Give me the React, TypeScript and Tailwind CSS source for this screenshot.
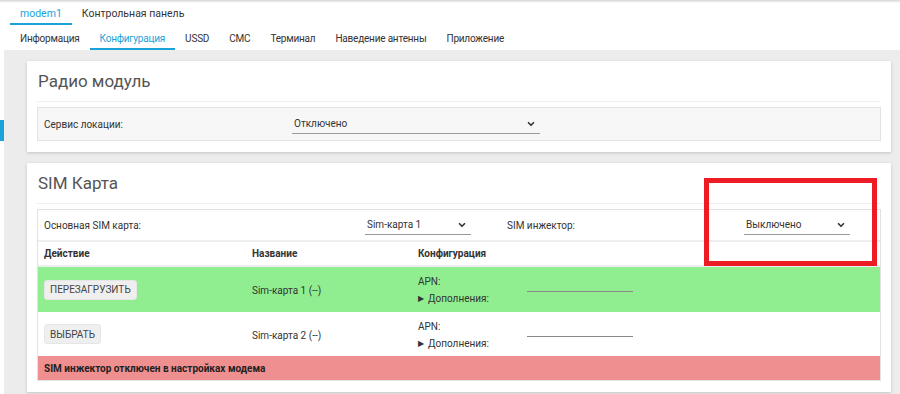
import { ChevronDown } from 'lucide-react'

const font = "font-['Roboto','Noto_Sans',sans-serif]"

type SelectProps = {
  value: string
  width: string
}

const Select = ({ value, width }: SelectProps) => (
  <div className={`${width} h-[20px] flex items-center justify-between border-b border-[#9a9a9a] pl-[2px] pr-[4px] text-[10px] text-[#333]`}>
    <span>{value}</span>
    <ChevronDown size={10} strokeWidth={4} className="text-[#333]" />
  </div>
)

const Card = ({ title, children }: { title: string; children: React.ReactNode }) => (
  <div className="bg-white shadow-[0_1px_3px_rgba(0,0,0,0.18)] px-[10px] pb-[11px]">
    <h2 className="pl-[1px] pt-[8px] pb-[8px] text-[17px] leading-[24px] text-[#555]">{title}</h2>
    <div className="h-[1px] bg-[#f0f0f0] mb-[5px]" />
    {children}
  </div>
)

const ActionButton = ({ label }: { label: string }) => (
  <button className="h-[20px] px-[5px] rounded-[3px] bg-[#efefef] border border-[#e6e6e6] text-[10px] text-[#444]">
    {label}
  </button>
)

type SimRow = {
  action: string
  name: string
  bg: string
  height: string
}

const rows: SimRow[] = [
  { action: 'ПЕРЕЗАГРУЗИТЬ', name: 'Sim-карта 1 (--)', bg: 'bg-[#90ee90]', height: 'h-[45px]' },
  { action: 'ВЫБРАТЬ', name: 'Sim-карта 2 (--)', bg: 'bg-white', height: 'h-[44px]' },
]

export default function App() {
  return (
    <div className={`${font} relative w-[900px] h-[394px] overflow-hidden bg-white text-[#333]`}>
      <div className="h-[3px] bg-gradient-to-b from-[#d6d6d6] to-white" />

      {/* top tabs */}
      <div className="flex h-[22px] pl-[10px] text-[10.5px]">
        <div className="px-[10px] pt-[3px] text-[#19a3d9] border-b-2 border-[#19a3d9]">modem1</div>
        <div className="px-[10px] pt-[3px]">Контрольная панель</div>
      </div>
      <div className="flex h-[25px] pl-[10px] text-[10px] tracking-[-0.2px]">
        {['Информация', 'Конфигурация', 'USSD', 'СМС', 'Терминал', 'Наведение антенны', 'Приложение'].map((t) =>
          t === 'Конфигурация' ? (
            <div key={t} className="px-[10px] pt-[6px] text-[#19a3d9] border-b-2 border-[#19a3d9]">{t}</div>
          ) : (
            <div key={t} className="px-[10px] pt-[6px]">{t}</div>
          ),
        )}
      </div>

      <div className="flex h-full">
        <div className="w-[4px] bg-white pt-[70px]">
          <div className="h-[21px] bg-[#19a3d9]" />
        </div>

        <div className="flex-1 bg-[#ececec] pl-[23px] pr-[9px] pt-[11px] flex flex-col gap-[11px]">
          <Card title="Радио модуль">
            <div className="h-[34px] flex items-center bg-[#f7f7f7] border border-[#e2e2e2] pl-[6px] text-[10px]">
              <div className="w-[248px]">Сервис локации:</div>
              <Select value="Отключено" width="w-[248px]" />
            </div>
          </Card>

          <Card title="SIM Карта">
            <div className="border border-[#e2e2e2] text-[10px]">
              <div className="h-[32px] flex items-center pl-[6px] border-b-2 border-[#eeeeee]">
                <div className="w-[321px]">Основная SIM карта:</div>
                <Select value="Sim-карта 1" width="w-[106px]" />
                <div className="w-[237px] ml-[36px]">SIM инжектор:</div>
                <Select value="Выключено" width="w-[106px]" />
              </div>

              <div className="h-[25px] flex items-center pl-[6px] font-bold border-b-2 border-[#eeeeee]">
                <div className="w-[208px]">Действие</div>
                <div className="w-[166px]">Название</div>
                <div>Конфигурация</div>
              </div>

              {rows.map((r) => (
                <div key={r.name} className={`${r.height} flex items-center pl-[6px] ${r.bg}`}>
                  <div className="w-[208px]">
                    <ActionButton label={r.action} />
                  </div>
                  <div className="w-[166px] pt-[2px]">{r.name}</div>
                  <div className="flex items-start pt-[2px]">
                    <div className="flex flex-col gap-[5px] w-[109px] leading-[12px]">
                      <span>APN:</span>
                      <span className="flex items-center gap-[4px]">
                        <span className="text-[8px]">▶</span>Дополнения:
                      </span>
                    </div>
                    <div className="w-[106px] h-[16px] border-b border-[#8a8a8a]" />
                  </div>
                </div>
              ))}

              <div className="h-[24px] flex items-center pl-[6px] bg-[#f08f8f] font-bold text-[#222]">
                SIM инжектор отключен в настройках модема
              </div>
            </div>
          </Card>
        </div>
      </div>

      {/* highlight annotation */}
      <div className="absolute left-[704px] top-[178px] w-[173px] h-[88px] border-[5px] border-[#ed1c24]" />
    </div>
  )
}
